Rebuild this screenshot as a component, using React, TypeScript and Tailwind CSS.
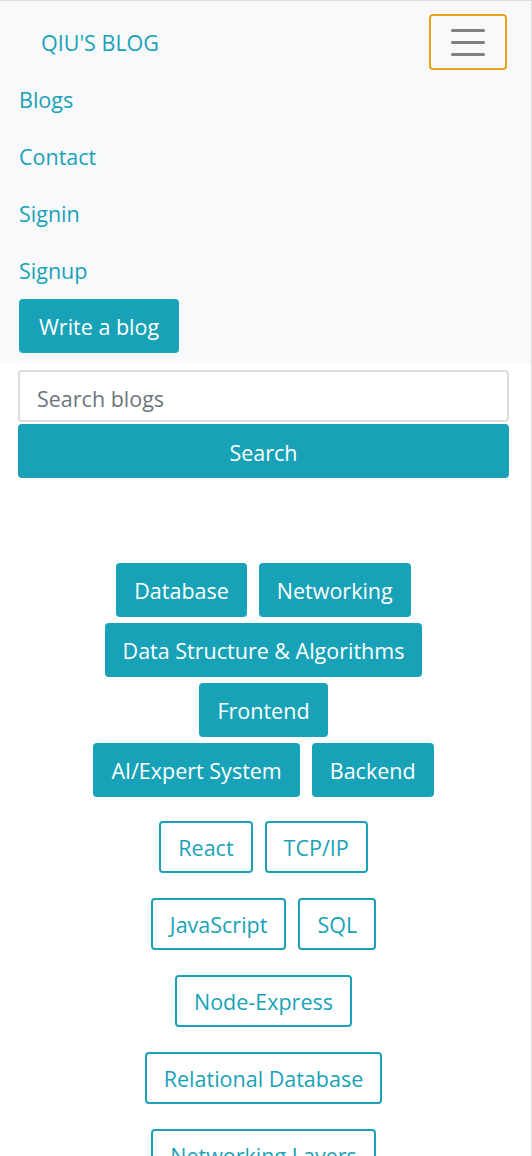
const categories: string[][] = [
  ["Database", "Networking"],
  ["Data Structure & Algorithms"],
  ["Frontend"],
  ["AI/Expert System", "Backend"],
];

const tags: string[][] = [
  ["React", "TCP/IP"],
  ["JavaScript", "SQL"],
  ["Node-Express"],
  ["Relational Database"],
  ["Networking Layers"],
];

const links = ["Blogs", "Contact", "Signin", "Signup"];

export default function App() {
  return (
    <div
      className="h-[1156px] overflow-hidden border-t border-r border-[#dcdcdc] bg-white text-[21.5px]"
      style={{ fontFamily: '"Open Sans", "Noto Sans", sans-serif' }}
    >
      <nav className="bg-[#f8f9fa] pl-[19px] pr-[24px] pt-[13px] pb-[10px]">
        <div className="flex items-center justify-between">
          <span className="pl-[22px] pt-[3px] text-[21.5px] text-[#17a2b8]">QIU'S BLOG</span>
          <button className="flex h-[56px] w-[78px] flex-col items-center justify-center gap-[9px] rounded-[4px] border-2 border-[#e8a317]">
            <span className="h-[3px] w-[34px] rounded bg-[#808080]" />
            <span className="h-[3px] w-[34px] rounded bg-[#808080]" />
            <span className="h-[3px] w-[34px] rounded bg-[#808080]" />
          </button>
        </div>
        <ul className="mt-[2px] flex flex-col">
          {links.map((l) => (
            <li key={l} className="flex h-[57px] items-center text-[#17a2b8]">
              {l}
            </li>
          ))}
        </ul>
        <button className="mt-[-1px] h-[54px] rounded-[4px] bg-[#17a2b8] px-[20px] pt-[2px] text-white">
          Write a blog
        </button>
      </nav>
      <div className="px-[18px] pt-[7px] pr-[22px]">
        <div className="flex h-[52px] items-center rounded-[4px] border-2 border-[#dadde2] px-[17px] pt-[6px] text-[#6c757d]">
          Search blogs
        </div>
        <button className="mt-[2px] h-[54px] w-full rounded-[4px] bg-[#17a2b8] pt-[4px] text-white">
          Search
        </button>
      </div>
      <div className="mt-[85px] flex flex-col items-center gap-[6px] px-[18px] pr-[22px]">
        {categories.map((row, i) => (
          <div key={i} className="flex justify-center gap-[12px]">
            {row.map((c) => (
              <span
                key={c}
                className="flex h-[54px] items-center rounded-[4px] bg-[#17a2b8] px-[18px] pt-[2px] text-white"
              >
                {c}
              </span>
            ))}
          </div>
        ))}
      </div>
      <div className="mt-[24px] flex flex-col items-center gap-[25px] px-[18px] pr-[22px]">
        {tags.map((row, i) => (
          <div key={i} className="flex justify-center gap-[12px]">
            {row.map((t) => (
              <span
                key={t}
                className="flex h-[52px] items-center rounded-[4px] border-2 border-[#17a2b8] px-[17px] pt-[2px] text-[#17a2b8]"
              >
                {t}
              </span>
            ))}
          </div>
        ))}
      </div>
    </div>
  );
}
